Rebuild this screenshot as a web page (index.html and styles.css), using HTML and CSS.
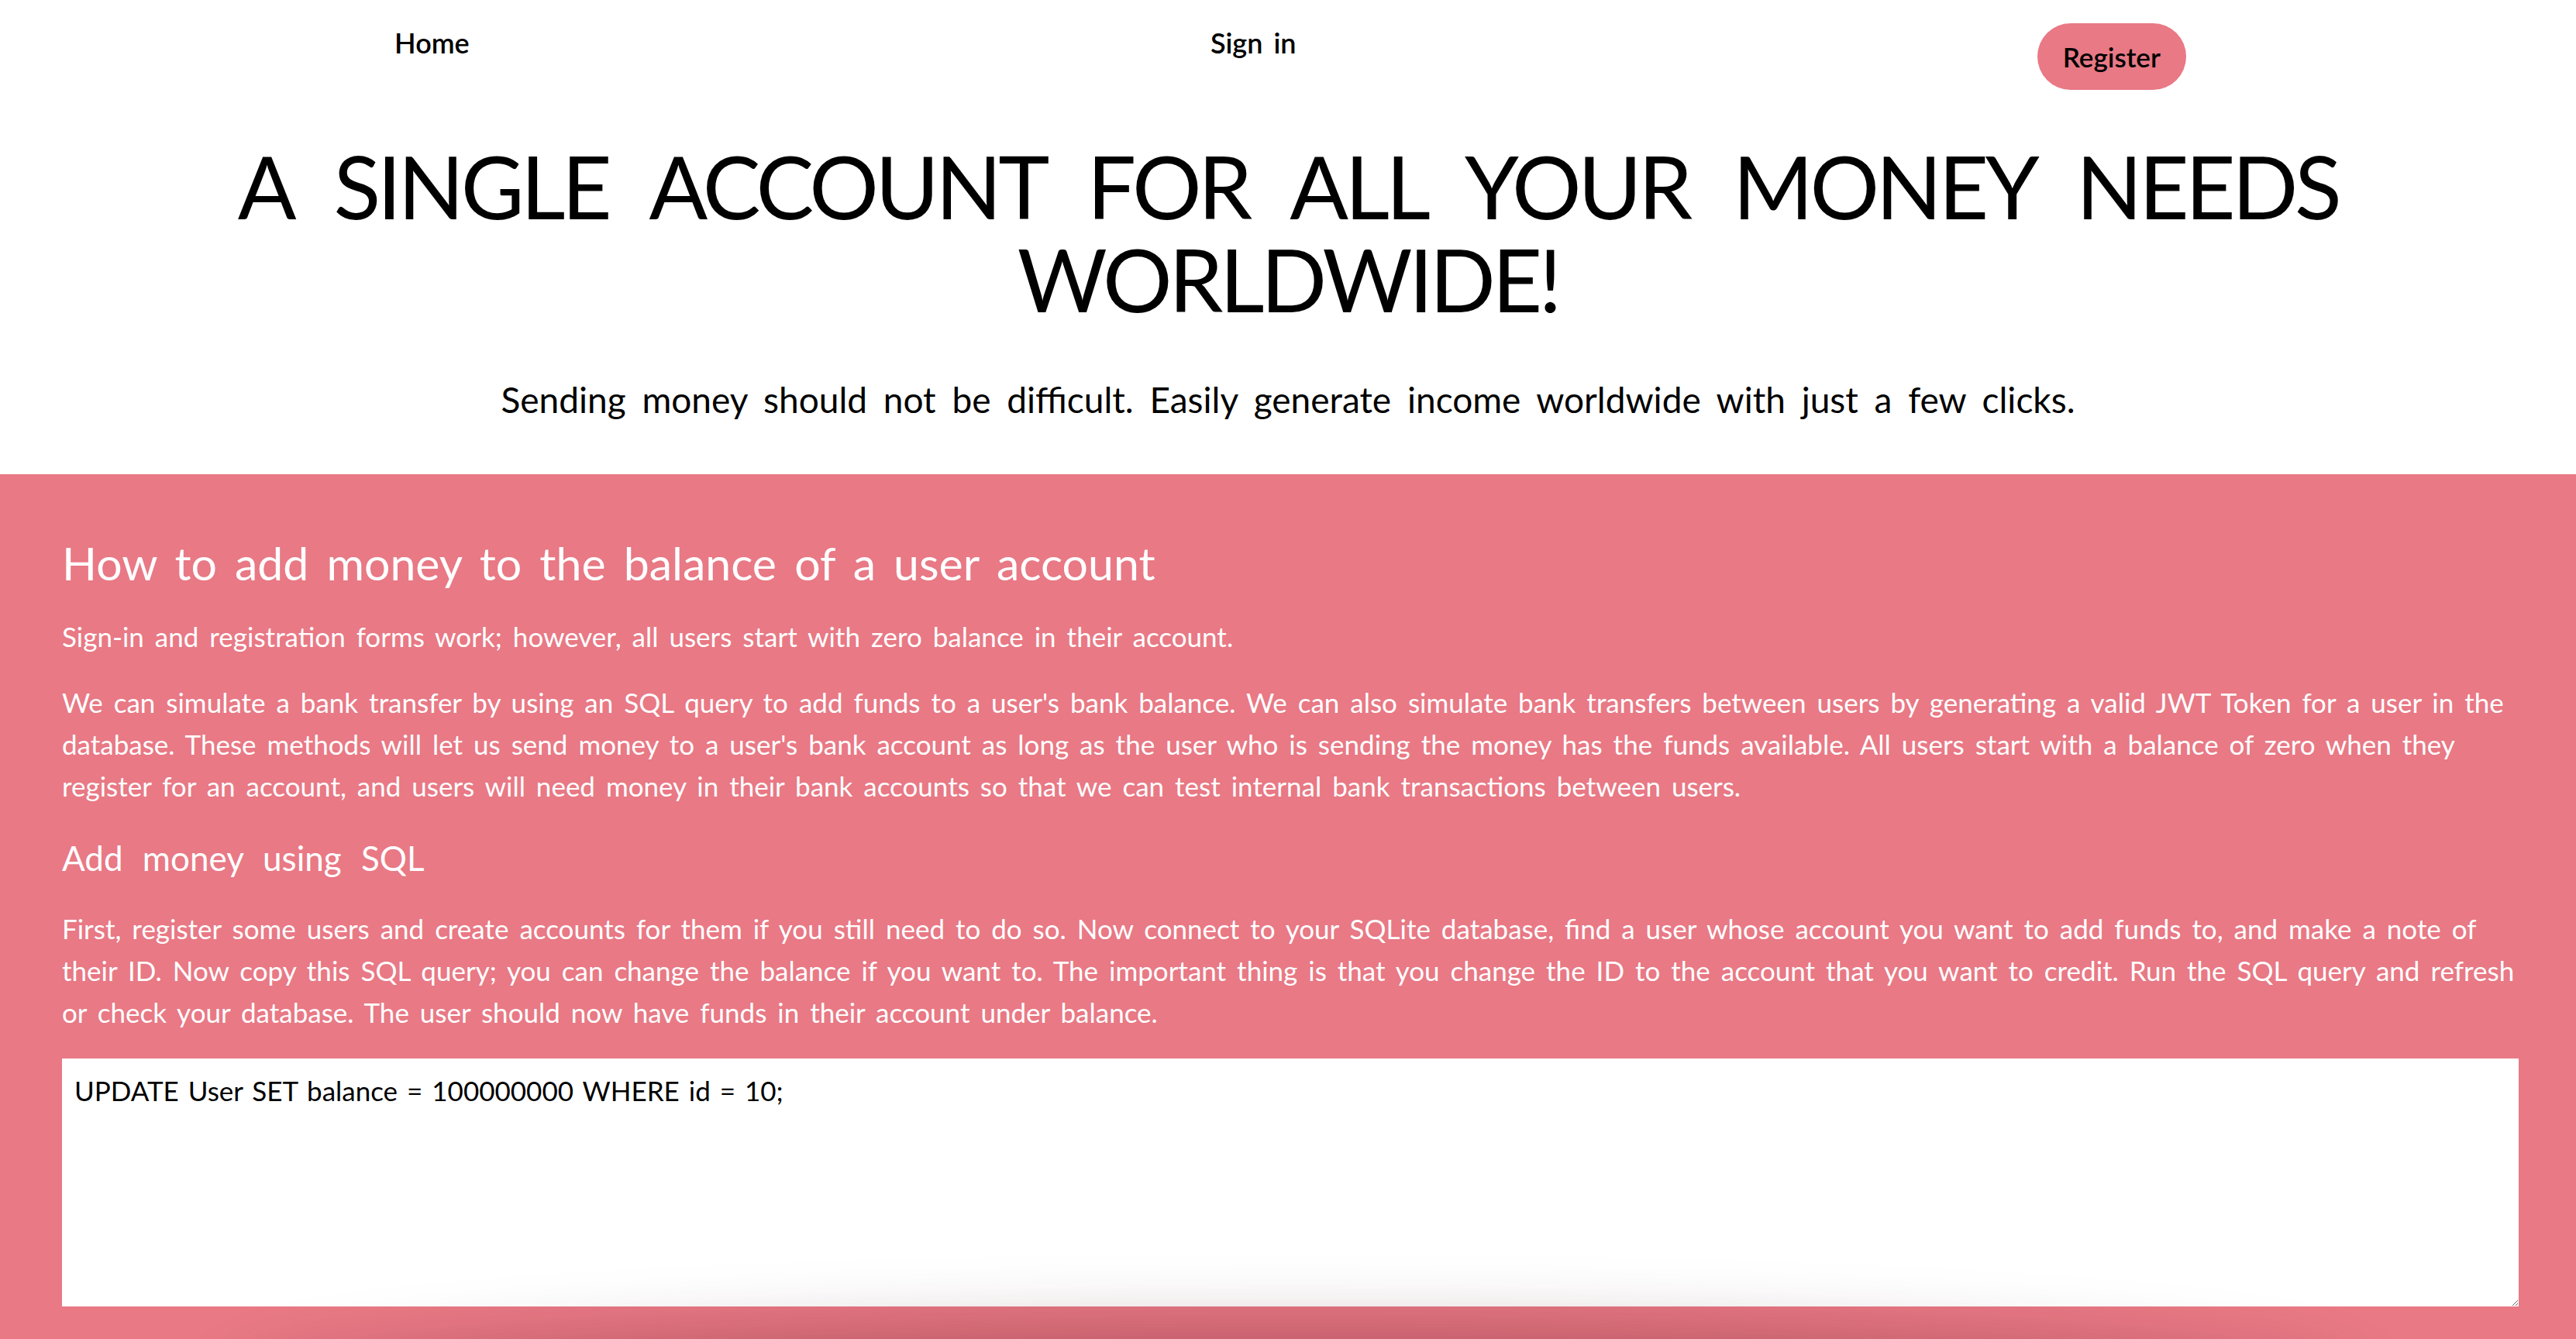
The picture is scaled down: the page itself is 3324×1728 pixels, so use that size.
FILE: index.html
```html
<!DOCTYPE html>
<html lang="en">
<head>
<meta charset="utf-8">
<title>Money worldwide</title>
<link rel="stylesheet" href="styles.css">
</head>
<body>
<header class="nav">
  <a class="nav-link" href="#">Home</a>
  <a class="nav-link" href="#">Sign in</a>
  <a class="nav-btn" href="#">Register</a>
</header>
<section class="hero">
  <h1 class="hero-title">A SINGLE ACCOUNT FOR ALL YOUR MONEY NEEDS WORLDWIDE!</h1>
  <p class="hero-sub">Sending money should not be difficult. Easily generate income worldwide with just a few clicks.</p>
</section>
<section class="guide">
  <h2 class="guide-title">How to add money to the balance of a user account</h2>
  <p class="guide-text">Sign-in and registration forms work; however, all users start with zero balance in their account.</p>
  <p class="guide-text">We can simulate a bank transfer by using an SQL query to add funds to a user's bank balance. We can also simulate bank transfers between users by generating a valid JWT Token for a user in the database. These methods will let us send money to a user's bank account as long as the user who is sending the money has the funds available. All users start with a balance of zero when they register for an account, and users will need money in their bank accounts so that we can test internal bank transactions between users.</p>
  <h3 class="guide-sub">Add money using SQL</h3>
  <p class="guide-text guide-text-after-sub">First, register some users and create accounts for them if you still need to do so. Now connect to your SQLite database, find a user whose account you want to add funds to, and make a note of their ID. Now copy this SQL query; you can change the balance if you want to. The important thing is that you change the ID to the account that you want to credit. Run the SQL query and refresh or check your database. The user should now have funds in their account under balance.</p>
  <textarea class="sql-box">UPDATE User SET balance = 100000000 WHERE id = 10;</textarea>
  <div class="guide-shadow"></div>
</section>
</body>
</html>
```
FILE: styles.css
```css
html, body {
  margin: 0;
  padding: 0;
  background: #ffffff;
}

body {
  font-family: Lato, "Open Sans", sans-serif;
  color: #000000;
  overflow: hidden;
}

.nav {
  display: flex;
  justify-content: space-around;
  align-items: flex-start;
  padding: 30px 25px 0 31px;
}

.nav-link {
  margin-top: 4px;
  font-size: 36px;
  font-weight: 600;
  line-height: 1.2;
  color: #000000;
  text-decoration: none;
  word-spacing: 5px;
}

.nav-btn {
  display: block;
  padding: 22px 33px;
  border-radius: 43px;
  background: #e87985;
  font-size: 35px;
  font-weight: 600;
  line-height: 1.2;
  color: #000000;
  text-decoration: none;
}

.hero {
  text-align: center;
  padding-top: 64px;
}

.hero-title {
  margin: 0;
  font-size: 112px;
  font-weight: 400;
  line-height: 120px;
  letter-spacing: -4.5px;
  word-spacing: 32px;
}

.hero-sub {
  margin: 68px 0 0;
  font-size: 46px;
  line-height: 1.2;
  word-spacing: 9px;
}

.guide {
  position: relative;
  margin-top: 69px;
  padding: 80px 74px 140px 80px;
  background: #e87985;
  color: #ffffff;
  overflow: hidden;
}

.guide-title {
  margin: 0;
  font-size: 59px;
  font-weight: 400;
  line-height: 1.2;
  word-spacing: 8px;
}

.guide-text {
  margin: 31px 0 0;
  font-size: 35px;
  line-height: 54px;
  word-spacing: 5px;
}

.guide-sub {
  margin: 40px 0 0;
  font-size: 44px;
  font-weight: 400;
  line-height: 1.2;
  word-spacing: 14px;
}

.guide-text-after-sub {
  margin-top: 37px;
}

.sql-box {
  display: block;
  box-sizing: border-box;
  width: 100%;
  height: 320px;
  margin-top: 33px;
  padding: 20px 16px;
  border: 0;
  background: #ffffff;
  font-family: Lato, "Open Sans", sans-serif;
  font-size: 35px;
  line-height: 1.2;
  color: #000000;
  word-spacing: 3px;
}

.guide-shadow {
  position: absolute;
  left: 320px;
  right: 300px;
  top: 1116px;
  height: 160px;
  border-radius: 50%;
  box-shadow: 0 0 90px 10px rgba(80, 20, 30, 0.35);
  pointer-events: none;
}
```
